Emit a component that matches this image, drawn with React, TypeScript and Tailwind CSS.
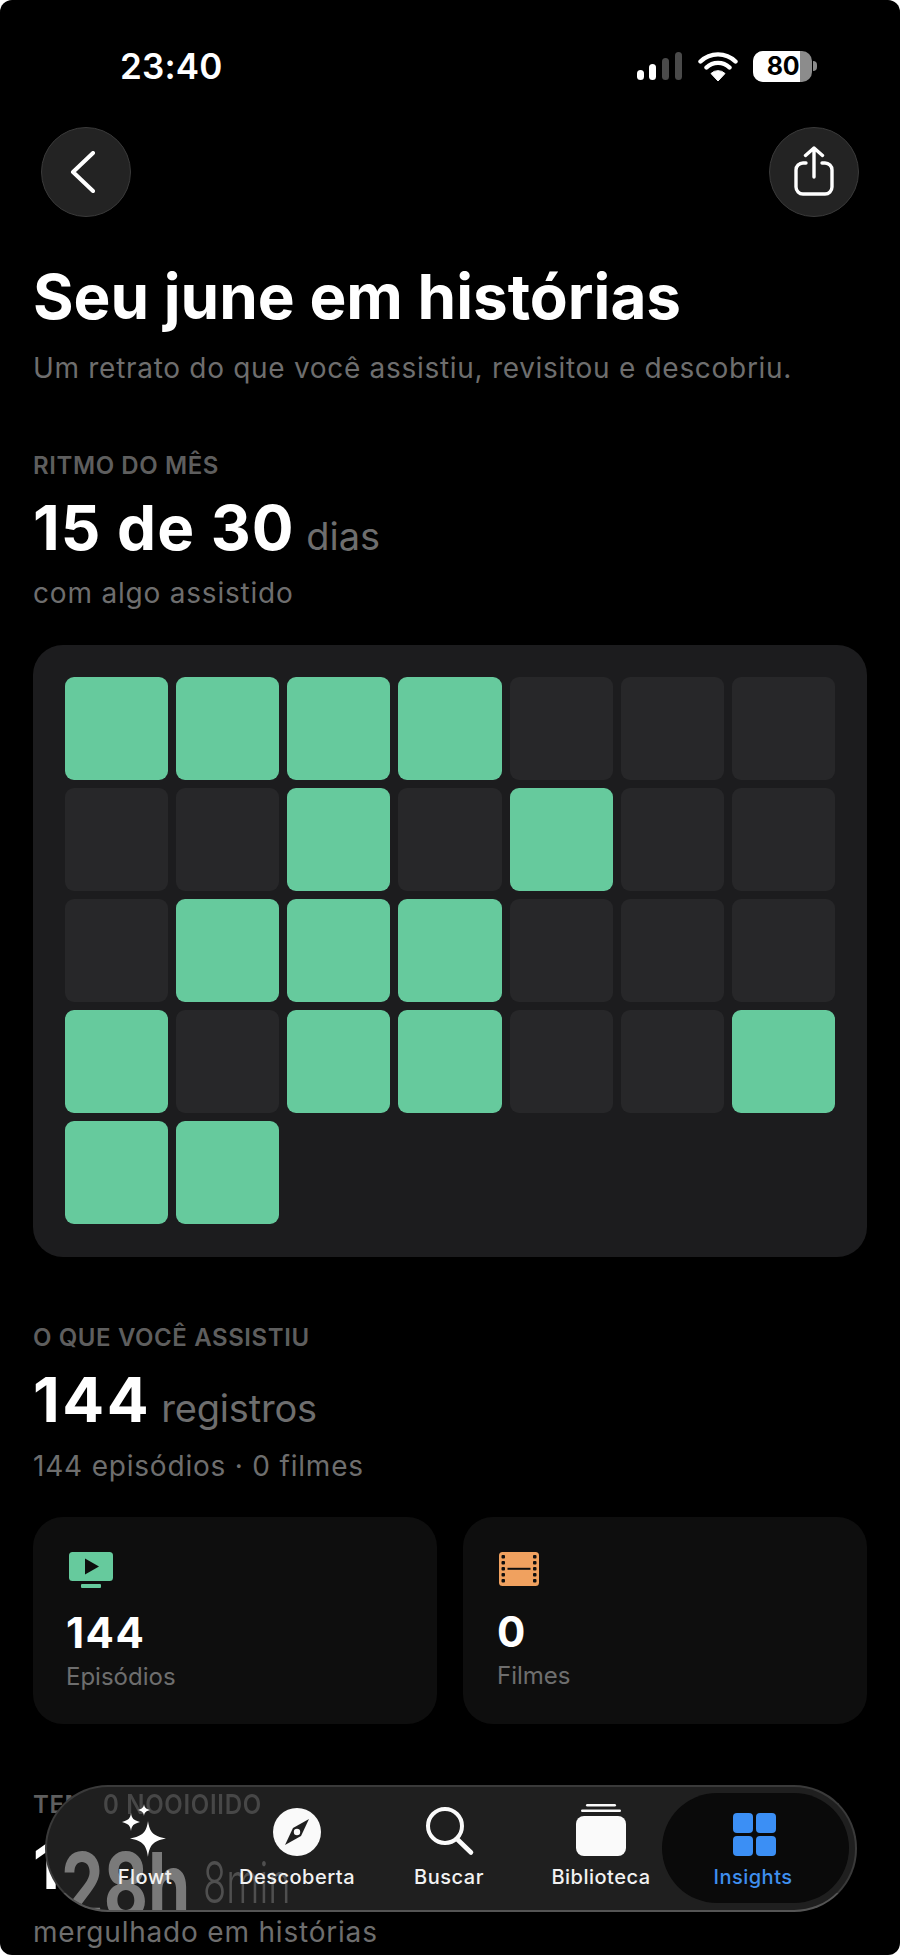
const days = [
  1, 1, 1, 1, 0, 0, 0,
  0, 0, 1, 0, 1, 0, 0,
  0, 1, 1, 1, 0, 0, 0,
  1, 0, 1, 1, 0, 0, 1,
  1, 1,
];

const StatusIcons = () => (
  <div className="flex items-center">
    <svg width="46" height="30" viewBox="0 0 46 30">
      <rect x="0" y="19" width="7" height="10" rx="3.5" fill="#fff" />
      <rect x="12" y="13" width="7" height="16" rx="3.5" fill="#fff" />
      <rect x="25" y="7" width="7" height="22" rx="3.5" fill="#4a4a4a" />
      <rect x="38" y="1" width="7" height="28" rx="3.5" fill="#4a4a4a" />
    </svg>
    <svg className="ml-[15px]" width="40" height="32" viewBox="0 0 40 32">
      <path d="M2.5 11.5a25 25 0 0 1 35 0M8.5 17.5a16.5 16.5 0 0 1 23 0" fill="none" stroke="#fff" strokeWidth="4.4" strokeLinecap="round" />
      <path d="M20 31l-7-7.5a10 10 0 0 1 14 0z" fill="#fff" stroke="#fff" strokeLinejoin="round" />
    </svg>
    <div className="relative ml-[15px] flex h-[31px] w-[59px] overflow-hidden rounded-[10px] bg-[#8c8c8c]">
      <div className="flex h-full w-[47px] items-center justify-end bg-white pr-[1px] font-[Inter] text-[25px] leading-none font-bold tracking-[-0.5px] text-black">80</div>
    </div>
    <div className="ml-[1px] h-[10px] w-[4px] rounded-r-full bg-[#8c8c8c]" />
  </div>
);

const RoundButton = ({ children }: { children: React.ReactNode }) => (
  <div className="flex h-[90px] w-[90px] items-center justify-center rounded-full border border-[#3a3a3a] bg-[#232323]">
    {children}
  </div>
);

const Eyebrow = ({ text, mt }: { text: string; mt: string }) => (
  <p className={`${mt} text-[24px] leading-[28px] font-semibold tracking-[0.6px] text-[#5e5e5e]`}>{text}</p>
);

const Sparkles = () => (
  <svg className="mr-[6px] translate-y-[2px]" width="50" height="54" viewBox="0 0 50 54" fill="#fff">
    <path d="M31 17c1.6 11 5 15 18 17.500-13 2.500-16.400 6.500-18 18.500-1.600-12-5-16-18-18.500 13-2.500 16.400-6.500 18-17.500z" />
    <path d="M14 9c.8 5.500 2.500 7.200 9 9-6.500 1.800-8.200 3.500-9 9-.8-5.500-2.500-7.200-9-9 6.500-1.800 8.200-3.500 9-9z" />
    <path d="M27 0c.5 3.500 1.500 4.800 6 6-4.500 1.200-5.500 2.500-6 6-.5-3.500-1.500-4.800-6-6 4.500-1.200 5.500-2.500 6-6z" />
  </svg>
);

const Compass = () => (
  <svg width="48" height="48" viewBox="0 0 48 48">
    <circle cx="24" cy="24" r="24" fill="#fafafa" />
    <path d="M36 11L28 28 12 37l8-17z" fill="#1f1f1f" />
    <circle cx="24" cy="24" r="3.200" fill="#fafafa" />
  </svg>
);

const Search = () => (
  <svg width="50" height="50" viewBox="0 0 50 50" fill="none" stroke="#fafafa" strokeWidth="4" strokeLinecap="round">
    <circle cx="20" cy="20" r="17" />
    <path d="M32 33l14 13.500" strokeWidth="4.600" />
  </svg>
);

const Library = () => (
  <svg width="50" height="52" viewBox="0 0 50 52" fill="#fafafa">
    <rect x="10" y="0" width="30" height="2.600" rx="1.300" />
    <rect x="5" y="5.500" width="40" height="2.600" rx="1.300" />
    <rect x="0" y="12" width="50" height="40" rx="8" />
  </svg>
);

const Grid4 = () => (
  <div className="grid grid-cols-[20px_20px] gap-[3px]">
    <div className="h-[20px] rounded-[4px] bg-[#3b8ff5]" />
    <div className="h-[20px] rounded-[4px] bg-[#3b8ff5]" />
    <div className="h-[20px] rounded-[4px] bg-[#3b8ff5]" />
    <div className="h-[20px] rounded-[4px] bg-[#3b8ff5]" />
  </div>
);

const NavItem = ({ icon, label, active }: { icon: React.ReactNode; label: string; active?: boolean }) => (
  <div className="relative flex w-[152px] flex-col items-center">
    <div className="flex h-[56px] items-end">{icon}</div>
    <span className={`mt-[8px] text-[20px] leading-[26px] font-medium tracking-[0.5px] ${active ? "text-[#3f8fef]" : "text-[#f2f2f2]"}`}>
      {label}
    </span>
  </div>
);

const App = () => (
  <div className="h-[1955px] overflow-hidden bg-white font-[Inter,sans-serif]">
    <div className="relative h-full overflow-hidden rounded-[12px] bg-black px-[33px] text-white">
      {/* status bar */}
      <div className="flex h-[40px] translate-y-[46px] items-center justify-between pr-[50px] pl-[87px]">
        <span className="text-[35px] leading-[40px] font-semibold tracking-[0.2px]">23:40</span>
        <StatusIcons />
      </div>

      <div className="mt-[87px] flex justify-between px-[8px]">
        <RoundButton>
          <svg className="mr-[6px]" width="26" height="42" viewBox="0 0 26 42" fill="none" stroke="#fff" strokeWidth="4" strokeLinecap="round" strokeLinejoin="round">
            <path d="M23 2L3 21l20 19" />
          </svg>
        </RoundButton>
        <RoundButton>
          <svg className="mb-[3px]" width="40" height="50" viewBox="0 0 40 50" fill="none" stroke="#fff" strokeWidth="3.400" strokeLinecap="round" strokeLinejoin="round">
            <path d="M12 17H9a7 7 0 0 0-7 7v17a7 7 0 0 0 7 7h22a7 7 0 0 0 7-7V24a7 7 0 0 0-7-7h-3" />
            <path d="M20 31V2M11.500 9.500L20 2l8.500 7.500" />
          </svg>
        </RoundButton>
      </div>

      <h1 className="mt-[44px] text-[62px] leading-[72px] font-bold">Seu june em histórias</h1>
      <p className="mt-[17px] text-[28px] leading-[36px] tracking-[0.7px] text-[#6e6e6e]">
        Um retrato do que você assistiu, revisitou e descobriu.
      </p>

      <Eyebrow text="RITMO DO MÊS" mt="mt-[66px]" />
      <p className="mt-[12px] text-[62px] leading-[72px] font-bold tracking-[1px]">
        15 de 30 <span className="ml-[-4px] text-[38px] leading-none font-normal tracking-[0px] text-[#6e6e6e]">dias</span>
      </p>
      <p className="mt-[11px] text-[28px] leading-[36px] tracking-[0.8px] text-[#6e6e6e]">com algo assistido</p>

      <div className="mt-[34px] grid h-[612px] grid-cols-7 content-start gap-[8px] rounded-[30px] bg-[#1c1c1e] p-[32px]">
        {days.map((on, i) => (
          <div key={i} className={`h-[103px] rounded-[9px] ${on ? "bg-[#66ca9d]" : "bg-[#272729]"}`} />
        ))}
      </div>

      <Eyebrow text="O QUE VOCÊ ASSISTIU" mt="mt-[67px]" />
      <p className="mt-[12px] text-[62px] leading-[72px] font-bold tracking-[2.500px]">
        144 <span className="ml-[-7px] text-[38px] leading-none font-normal tracking-[-0.2px] text-[#6e6e6e]">registros</span>
      </p>
      <p className="mt-[12px] text-[28px] leading-[36px] tracking-[0.8px] text-[#6e6e6e]">144 episódios · 0 filmes</p>

      <div className="mt-[33px] grid grid-cols-2 gap-[26px]">
        <div className="h-[207px] rounded-[30px] bg-[#0e0e0e] px-[33px] pt-[35px]">
          <svg className="ml-[3px]" width="44" height="36" viewBox="0 0 44 36">
            <rect x="0" y="0" width="44" height="29" rx="3.500" fill="#66ca9d" />
            <rect x="12" y="32" width="20" height="4" rx="1" fill="#66ca9d" />
            <path d="M16 6.500l14 8-14 8z" fill="#0e0e0e" />
          </svg>
          <p className="mt-[20px] text-[42px] leading-[50px] font-bold tracking-[1.500px]">144</p>
          <p className="mt-[3px] text-[24px] leading-[32px] text-[#6e6e6e]">Episódios</p>
        </div>
        <div className="h-[207px] rounded-[30px] bg-[#0e0e0e] px-[34px] pt-[35px]">
          <svg className="ml-[2px]" width="40" height="34" viewBox="0 0 40 34">
            <rect x="0" y="0" width="40" height="34" rx="3.500" fill="#f0a15f" />
            <path d="M8.500 16.800h23" stroke="#0e0e0e" strokeWidth="2" />
            <g fill="#0e0e0e">
              <rect x="2.500" y="3" width="3.500" height="3.500" rx="1" />
              <rect x="2.500" y="9" width="3.500" height="3.500" rx="1" />
              <rect x="2.500" y="15" width="3.500" height="3.500" rx="1" />
              <rect x="2.500" y="21" width="3.500" height="3.500" rx="1" />
              <rect x="2.500" y="27" width="3.500" height="3.500" rx="1" />
              <rect x="34" y="3" width="3.500" height="3.500" rx="1" />
              <rect x="34" y="9" width="3.500" height="3.500" rx="1" />
              <rect x="34" y="15" width="3.500" height="3.500" rx="1" />
              <rect x="34" y="21" width="3.500" height="3.500" rx="1" />
              <rect x="34" y="27" width="3.500" height="3.500" rx="1" />
            </g>
          </svg>
          <p className="mt-[21px] text-[42px] leading-[50px] font-bold">0</p>
          <p className="mt-[3px] text-[24px] leading-[32px] text-[#6e6e6e]">Filmes</p>
        </div>
      </div>

      <Eyebrow text="TEMPO ASSISTIDO" mt="mt-[67px]" />
      <p className="mt-[12px] text-[62px] leading-[72px] font-bold">
        128h <span className="text-[38px] leading-none font-normal text-[#6e6e6e]">8min</span>
      </p>
      <p className="mt-[11px] text-[28px] leading-[36px] tracking-[0.8px] text-[#6e6e6e]">mergulhado em histórias</p>

      {/* floating tab bar */}
      <div className="absolute top-[1785px] left-[45px] h-[127px] w-[812px] overflow-hidden rounded-[63px] border-[2px] border-[#3a3a3a] border-b-[#555555] bg-[#1f1f1f]">
        {/* content refracted through the glass */}
        <span aria-hidden className="absolute top-[4px] left-[56px] scale-y-[1.15] text-[24px] leading-[28px] font-semibold tracking-[0.7px] text-[#474747] blur-[0.5px]">
          0 NOOIOIIDO
        </span>
        <span aria-hidden className="absolute top-[50px] left-[14px] origin-top scale-y-[1.35] text-[68px] leading-[72px] font-bold text-[#7a7a7a] blur-[0.5px]">
          28h
        </span>
        <span aria-hidden className="absolute top-[62px] left-[156px] origin-top scale-y-[1.5] text-[38px] leading-[44px] font-light text-[#4f4f4f] blur-[0.5px]">
          8min
        </span>
        <div className="absolute top-[6px] right-[6px] h-[110px] w-[187px] rounded-[55px] bg-[#0a0a0a]" />
        <div className="relative flex pt-[13px] pl-[22px]">
          <NavItem icon={<Sparkles />} label="Flowt" />
          <NavItem icon={<Compass />} label="Descoberta" />
          <NavItem icon={<div className="ml-[2px]"><Search /></div>} label="Buscar" />
          <NavItem icon={<Library />} label="Biblioteca" />
          <NavItem icon={<div className="ml-[2px]"><Grid4 /></div>} label="Insights" active />
        </div>
      </div>
    </div>
  </div>
);

export default App;
